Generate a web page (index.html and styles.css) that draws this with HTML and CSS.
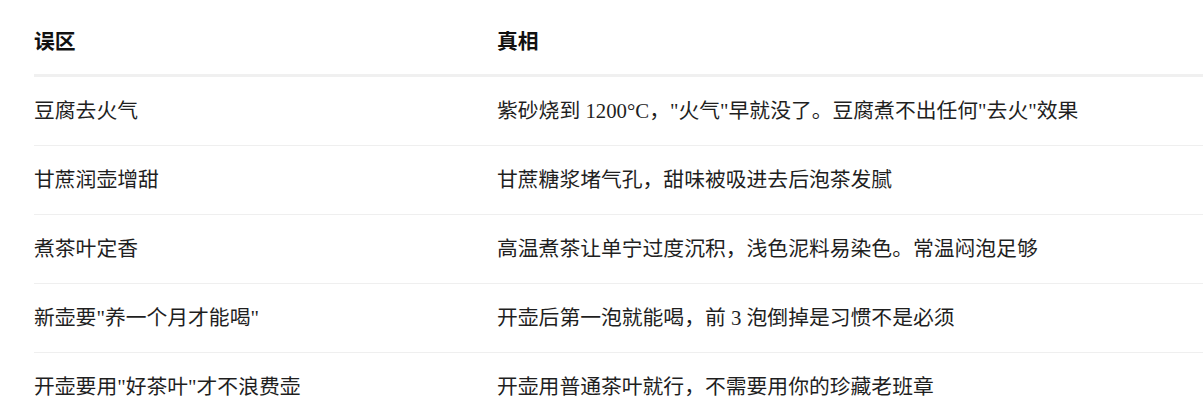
FILE: index.html
```html
<!DOCTYPE html>
<html lang="zh-CN">
<head>
<meta charset="utf-8">
<link rel="stylesheet" href="styles.css">
</head>
<body>
<table class="myths">
  <thead>
    <tr><th class="col-myth">误区</th><th>真相</th></tr>
  </thead>
  <tbody>
    <tr><td>豆腐去火气</td><td>紫砂烧到 1200°C，"火气"早就没了。豆腐煮不出任何"去火"效果</td></tr>
    <tr><td>甘蔗润壶增甜</td><td>甘蔗糖浆堵气孔，甜味被吸进去后泡茶发腻</td></tr>
    <tr><td>煮茶叶定香</td><td>高温煮茶让单宁过度沉积，浅色泥料易染色。常温闷泡足够</td></tr>
    <tr><td>新壶要"养一个月才能喝"</td><td>开壶后第一泡就能喝，前 3 泡倒掉是习惯不是必须</td></tr>
    <tr><td>开壶要用"好茶叶"才不浪费壶</td><td>开壶用普通茶叶就行，不需要用你的珍藏老班章</td></tr>
  </tbody>
</table>
</body>
</html>
```

FILE: styles.css
```css
html, body {
  margin: 0;
  padding: 0;
  background: #ffffff;
  overflow: hidden;
}
body {
  padding-left: 34px;
  font-family: "Liberation Serif", "Noto Sans CJK SC", serif;
  font-size: 20.8px;
  color: #1f1f1f;
}
.myths {
  width: 100%;
  border-collapse: collapse;
}
.myths th, .myths td {
  text-align: left;
  padding: 0;
  line-height: 30px;
  vertical-align: middle;
}
.myths th {
  font-weight: 700;
  color: #111111;
  padding-top: 27px;
  padding-bottom: 17px;
  border-bottom: 3px solid #f0f0f0;
}
.myths .col-myth {
  width: 463px;
}
.myths td {
  height: 68px;
  border-bottom: 1px solid #efefef;
}
.myths tbody tr:last-child td {
  border-bottom: none;
}
```
